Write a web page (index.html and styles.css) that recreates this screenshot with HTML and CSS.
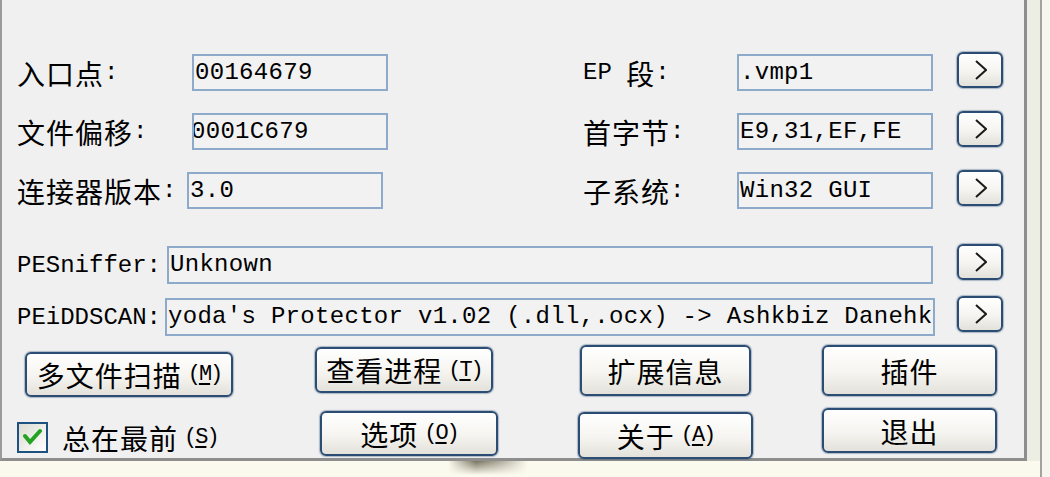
FILE: index.html
```html
<!DOCTYPE html>
<html lang="zh-CN">
<head>
  <meta charset="UTF-8">
  <title>PEiD</title>
  <link rel="stylesheet" href="styles.css">
</head>
<body>
  <div class="window">
    <div class="main">
      <div class="panel">
        <div class="info">
          <div class="row">
            <label class="lbl"><span class="cn">入口点</span>:</label>
            <div class="fld">00164679</div>
            <label class="lbl right">EP&nbsp;<span class="cn">段</span>:</label>
            <div class="fld">.vmp1</div>
            <button class="btn arrow"><svg width="12" height="20" viewBox="0 0 12 20"><polyline points="1,1 11,10 1,19" /></svg></button>
          </div>
          <div class="row">
            <label class="lbl"><span class="cn">文件偏移</span>:</label>
            <div class="fld"><span class="scrolled">0001C679</span></div>
            <label class="lbl right"><span class="cn">首字节</span>:</label>
            <div class="fld">E9,31,EF,FE</div>
            <button class="btn arrow"><svg width="12" height="20" viewBox="0 0 12 20"><polyline points="1,1 11,10 1,19" /></svg></button>
          </div>
          <div class="row">
            <label class="lbl narrow"><span class="cn">连接器版本</span>:</label>
            <div class="fld">3.0</div>
            <label class="lbl right wide-gap"><span class="cn">子系统</span>:</label>
            <div class="fld">Win32 GUI</div>
            <button class="btn arrow"><svg width="12" height="20" viewBox="0 0 12 20"><polyline points="1,1 11,10 1,19" /></svg></button>
          </div>
        </div>

        <div class="pe-list">
          <div class="pe-row">
            <label class="lbl pe">PESniffer:</label>
            <div class="fld wide">Unknown</div>
            <button class="btn arrow"><svg width="12" height="20" viewBox="0 0 12 20"><polyline points="1,1 11,10 1,19" /></svg></button>
          </div>
          <div class="pe-row">
            <label class="lbl pe tight">PEiDDSCAN:</label>
            <div class="fld wide">yoda's Protector v1.02 (.dll,.ocx) -&gt; Ashkbiz Danehk</div>
            <button class="btn arrow close"><svg width="12" height="20" viewBox="0 0 12 20"><polyline points="1,1 11,10 1,19" /></svg></button>
          </div>
        </div>

        <div class="actions">
          <button class="btn act act-scan"><span class="cn">多文件扫描</span><span class="key">(<u>M</u>)</span></button>
          <button class="btn act act-proc"><span class="cn">查看进程</span><span class="key">(<u>T</u>)</span></button>
          <button class="btn act act-ext"><span class="cn">扩展信息</span></button>
          <button class="btn act act-plug"><span class="cn">插件</span></button>

          <label class="always">
            <span class="check"><svg width="20" height="18" viewBox="0 0 20 18"><polyline points="2,8 7,14 17,3" /></svg></span>
            <span class="cn">总在最前</span><span class="key">(<u>S</u>)</span>
          </label>
          <button class="btn act act-opt"><span class="cn">选项</span><span class="key">(<u>O</u>)</span></button>
          <button class="btn act act-about"><span class="cn">关于</span><span class="key">(<u>A</u>)</span></button>
          <button class="btn act act-exit"><span class="cn">退出</span></button>
        </div>
      </div>
      <div class="rail"></div>
    </div>
    <div class="foot"><div class="smudge"></div></div>
  </div>
</body>
</html>
```

FILE: styles.css
```css
html,body {
  margin: 0;
  padding: 0;
  overflow: hidden;
}
body {
  width: 1050px;
  height: 477px;
  background-color: #f6f6ef;
  color: #000;
  font-family: "Liberation Mono", "Noto Sans CJK SC", monospace;
  font-size: 24px;
}
.cn {
  font-family: "Noto Sans CJK SC", sans-serif;
  font-size: 28px;
  line-height: 1;
  letter-spacing: 1px;
}

/* window frame */
.window {
  width: 1040px;
  height: 495px;
  background-color: #fbfaee;
  border-right: 2px solid #a4a49d;
  border-bottom-right-radius: 18px;
  overflow: hidden;
}
.main {
  display: flex;
  height: 461px;
}
.panel {
  box-sizing: border-box;
  width: 1027px;
  flex: none;
  padding: 54px 21px 0 15px;

  background-color: #f0f0f0;
  border-left: 2px solid #9a9a9a;
  border-right: 3px solid #8e8e8e;
  border-bottom: 3px solid #8e8e8e;
}
.rail {
  flex: 1;
  background-color: #eceee4;
}
.foot {
  height: 34px;
}
.smudge {
  margin-left: 448px;
  width: 80px;
  height: 14px;
  background:
    linear-gradient(rgba(251, 250, 238, 0), #fbfaee),
    linear-gradient(90deg, rgba(96, 90, 70, 0), rgba(96, 90, 70, 0.85) 35%, rgba(96, 90, 70, 0.5) 65%, rgba(96, 90, 70, 0));
}

/* top fields */
.info {
  display: flex;
  flex-direction: column;
  gap: 22px;
}
.row, .pe-row {
  display: flex;
  align-items: center;
  height: 37px;
}
.lbl {
  display: flex;
  align-items: center;
  flex: none;
  width: 175px;
  white-space: nowrap;
}
.lbl.narrow {
  width: 170px;
}
.lbl.right {
  width: 154px;
  margin-left: 195px;
}
.lbl.right.wide-gap {
  margin-left: 200px;
}
.fld {
  box-sizing: border-box;
  flex: none;
  width: 196px;
  height: 37px;
  padding-left: 1px;

  background-color: #f2f2f2;
  border: 2px solid #8eaacb;
  line-height: 33px;
  letter-spacing: 0.3px;
  white-space: nowrap;
  overflow: hidden;
}
.scrolled {
  margin-left: -4px;
}

/* PE scanners */
.pe-list {
  margin-top: 37px;
  display: flex;
  flex-direction: column;
  gap: 14px;
}
.pe-row {
  height: 38px;
}
.lbl.pe {
  width: 150px;
}
.lbl.pe.tight {
  width: 148px;
}
.fld.wide {
  flex: 1;
  width: auto;
  height: 38px;
}

/* buttons */
.btn {
  box-sizing: border-box;
  display: flex;
  align-items: center;
  justify-content: center;
  padding: 0;
  margin: 0;

  font: inherit;
  color: inherit;
  background: linear-gradient(#ffffff, #f5f4f0 55%, #e3e1da);
  border: 2px solid #2b4d73;
  border-radius: 6px;
  box-shadow: 0 0 1px 1px rgba(43, 77, 115, 0.35);
}
.arrow {
  flex: none;
  align-self: flex-start;
  width: 46px;
  height: 36px;
  margin-top: -2px;
  margin-left: 24px;
}
.arrow.close {
  margin-left: 22px;
}
.arrow svg {
  margin-left: 2px;
  fill: none;
  stroke: #1a1a1a;
  stroke-width: 2;
}
.key {
  margin-left: 6px;
  font-size: 22px;
  letter-spacing: -2px;
}
.key u {
  text-underline-offset: 3px;
}

/* bottom actions */
.actions {
  margin-top: 9px;
  display: grid;
  grid-template-columns: 298px 263px 244px 175px;
  grid-template-rows: 52px 52px;
  row-gap: 10px;
}
.act {
  align-self: start;
  justify-self: start;
  width: 175px;
}
.act-scan {
  width: 208px;
  height: 45px;
  margin: 7px 0 0 8px;
}
.act-proc {
  width: 178px;
  height: 46px;
  margin-top: 2px;
}
.act-ext {
  width: 171px;
  height: 51px;
  margin-left: 2px;
}
.act-plug {
  height: 51px;
}
.act-opt {
  width: 178px;
  height: 45px;
  margin: 4px 0 0 5px;
}
.act-about {
  height: 47px;
  margin-top: 5px;
}
.act-exit {
  height: 45px;
  margin-top: 1px;
}
.always {
  align-self: start;
  display: flex;
  align-items: center;
  margin-top: 15px;
  white-space: nowrap;
}
.check {
  box-sizing: border-box;
  display: flex;
  align-items: center;
  justify-content: center;
  width: 31px;
  height: 31px;
  margin-right: 14px;

  background: linear-gradient(135deg, #dcdcd3, #ffffff);
  border: 2px solid #1d5180;
}
.check svg {
  margin-top: -2px;
  fill: none;
  stroke: #22a322;
  stroke-width: 4;
  stroke-linecap: round;
}
```
